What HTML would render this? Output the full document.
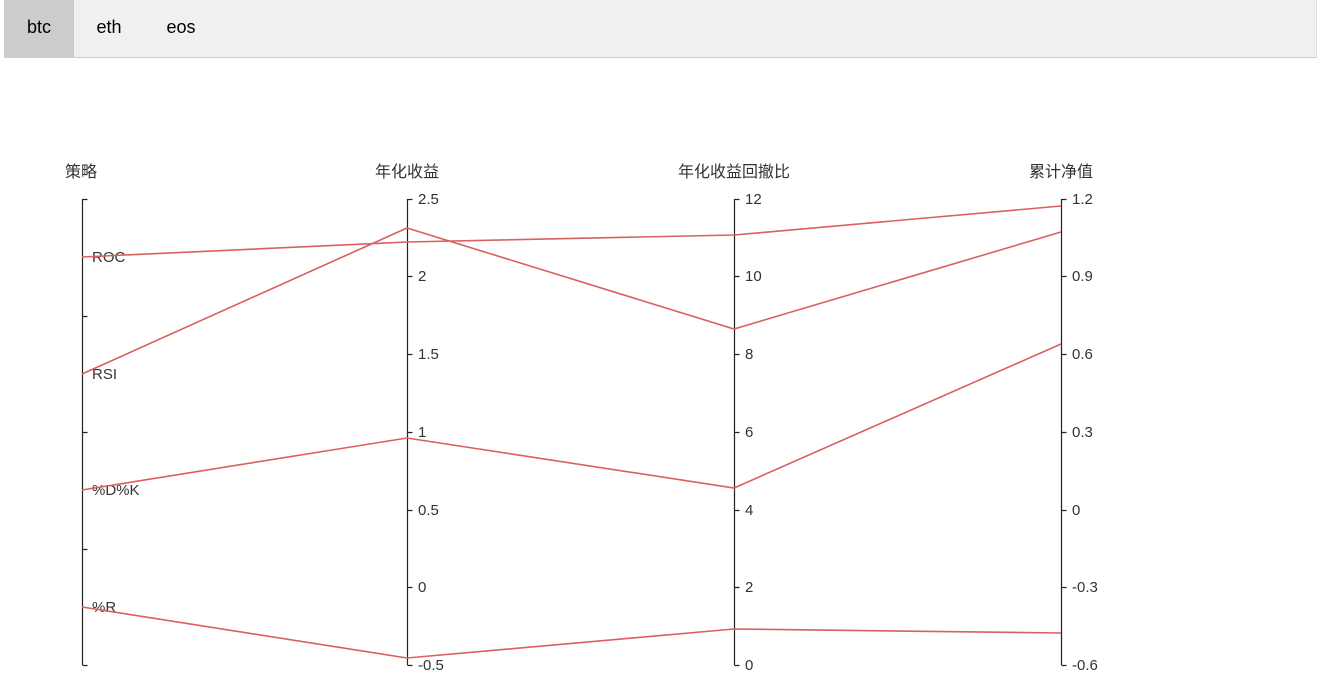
<!DOCTYPE html>
<html><head><meta charset="utf-8"><style>
body{margin:0;background:#fff;width:1318px;height:699px;overflow:hidden;font-family:"Liberation Sans","Noto Sans CJK SC",sans-serif}
.bar{position:absolute;left:4px;top:0;width:1313px;height:58px;background:#f0f0f0;border-bottom:1px solid #ccc;border-right:1px solid #ddd;box-sizing:border-box}
.t{position:absolute;top:0;height:57px;line-height:54px;font-size:18px;color:#000;text-align:center}
</style></head><body>
<div class="bar">
<div class="t" style="left:0;width:70px;background:#ccc">btc</div>
<div class="t" style="left:70px;width:70px">eth</div>
<div class="t" style="left:142px;width:70px">eos</div>
</div>
<svg width="1318" height="699" style="position:absolute;left:0;top:0" font-family="Liberation Sans, Noto Sans CJK SC, sans-serif" font-size="15" fill="#333">
<g stroke="#222" stroke-width="1.2" fill="none">
<path d="M82.5 199v466M82.5 199.5h5M82.5 316.5h5M82.5 432.5h5M82.5 549.5h5M82.5 665.5h5"/>
<path d="M407.5 199v466M407.5 199.5h5M407.5 276.5h5M407.5 354.5h5M407.5 432.5h5M407.5 510.5h5M407.5 587.5h5M407.5 665.5h5"/>
<path d="M734.5 199v466M734.5 199.5h5M734.5 276.5h5M734.5 354.5h5M734.5 432.5h5M734.5 510.5h5M734.5 587.5h5M734.5 665.5h5"/>
<path d="M1061.5 199v466M1061.5 199.5h5M1061.5 276.5h5M1061.5 354.5h5M1061.5 432.5h5M1061.5 510.5h5M1061.5 587.5h5M1061.5 665.5h5"/>
</g>
<g text-anchor="middle" font-size="16"><text x="81" y="177">策略</text><text x="407" y="177">年化收益</text><text x="734" y="177">年化收益回撤比</text><text x="1061" y="177">累计净值</text></g>
<g>
<text x="92" y="262">ROC</text><text x="92" y="379">RSI</text><text x="92" y="495">%D%K</text><text x="92" y="612">%R</text>
<text x="418" y="204">2.5</text><text x="418" y="281">2</text><text x="418" y="359">1.5</text><text x="418" y="437">1</text><text x="418" y="515">0.5</text><text x="418" y="592">0</text><text x="418" y="670">-0.5</text>
<text x="745" y="204">12</text><text x="745" y="281">10</text><text x="745" y="359">8</text><text x="745" y="437">6</text><text x="745" y="515">4</text><text x="745" y="592">2</text><text x="745" y="670">0</text>
<text x="1072" y="204">1.2</text><text x="1072" y="281">0.9</text><text x="1072" y="359">0.6</text><text x="1072" y="437">0.3</text><text x="1072" y="515">0</text><text x="1072" y="592">-0.3</text><text x="1072" y="670">-0.6</text>
</g>
<g stroke="#d9605e" stroke-width="1.6" fill="none">
<polyline points="82,257 407,242 734,235 1061,206"/>
<polyline points="82,374 407,228 734,329 1061,232"/>
<polyline points="82,490 407,438 734,488 1061,344"/>
<polyline points="82,607 407,658 734,629 1061,633"/>
</g>
</svg>
</body></html>
